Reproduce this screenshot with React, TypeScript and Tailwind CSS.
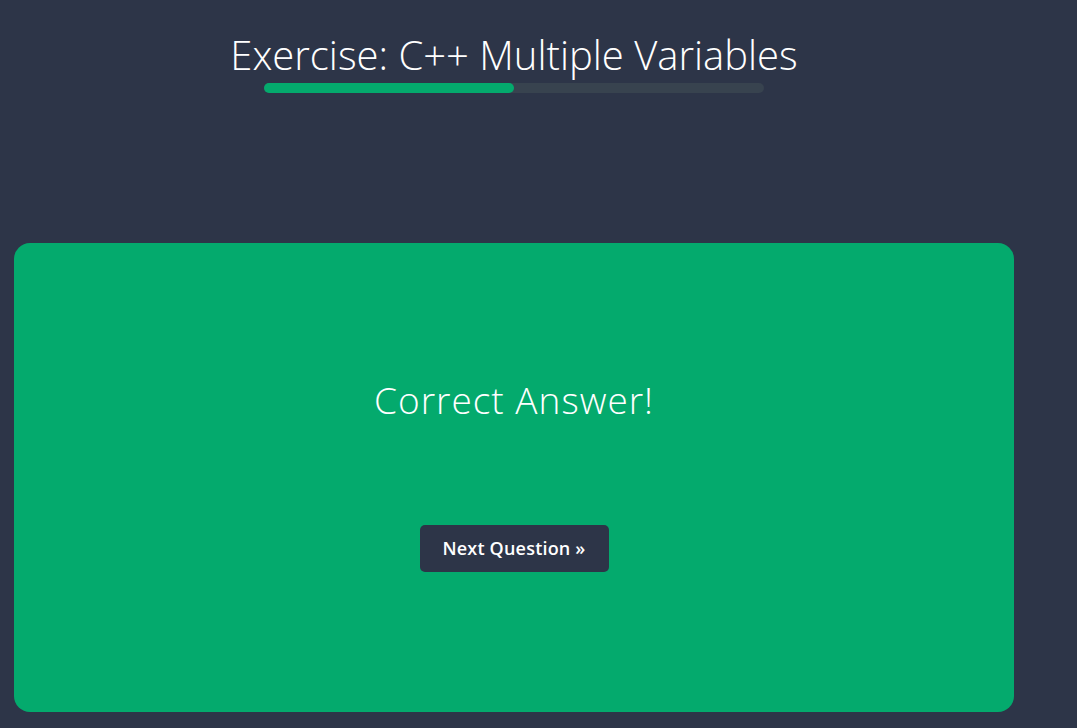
export default function App() {
  return (
    <div className="min-h-[728px] w-full bg-[#2d3548] text-white" style={{ fontFamily: '"Open Sans", "Noto Sans", sans-serif' }}>
      <div className="ml-[14px] w-[1000px] flex flex-col items-center">
        {/* heading + progress */}
        <h1 className="mt-[28px] text-[40px] font-light leading-[54px]">Exercise: C++ Multiple Variables</h1>
        <div className="mt-[1px] h-[10px] w-[500px] rounded-full bg-[#38434f]">
          <div className="h-full w-1/2 rounded-full bg-[#04aa6d]" />
        </div>
        {/* result card */}
        <div className="mt-[150px] mb-[16px] flex h-[469px] w-full flex-col items-center rounded-[16px] bg-[#04aa6d]">
          <p className="mt-[133px] text-[37px] font-light leading-[48px] tracking-[1px]">Correct Answer!</p>
          <button className="mt-[101px] h-[47px] w-[189px] rounded-[5px] bg-[#2d3548] text-[18px] font-semibold tracking-[0.2px] text-white">
            Next Question »
          </button>
        </div>
      </div>
    </div>
  );
}
